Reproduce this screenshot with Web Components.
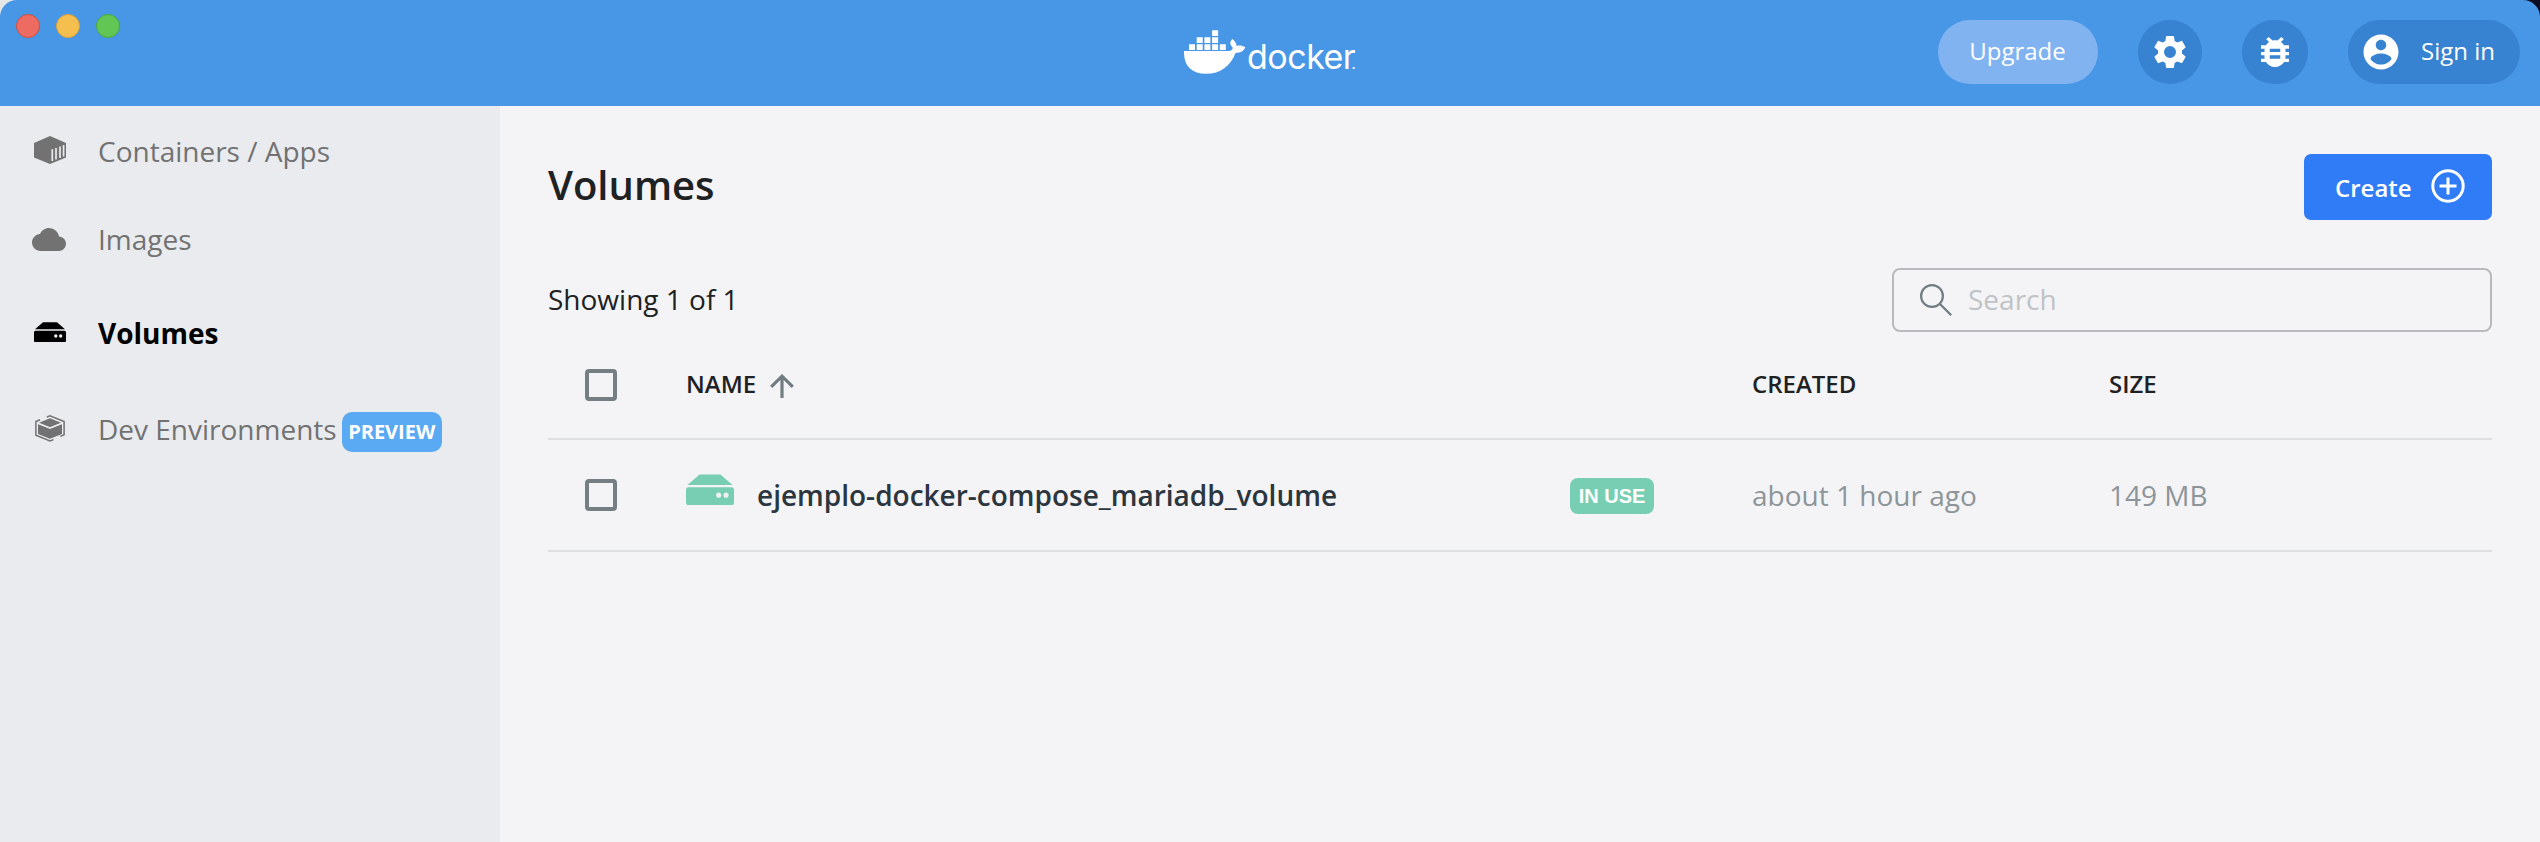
<!DOCTYPE html>
<html lang="en">
<head>
<meta charset="utf-8">
<title>Docker Desktop</title>
<style>
html,body{margin:0;height:100%}
body{font-family:"Open Sans","Noto Sans",sans-serif;background:#f4f4f6;overflow:hidden}
</style>
</head>
<body>
<docker-window></docker-window>
<script>
const ICONS={
container:`<svg width="32" height="28" viewBox="0 0 32 28"><path fill="currentColor" d="M16 0L32 7V21.500L16 28L0 21.500V7Z"/><path stroke="#e9ebee" stroke-width="1.700" fill="none" d="M18.300 25V13.300M22 23.500V11.900M26 22V10.400M29.600 20.600V9"/></svg>`,
cloud:`<svg width="34" height="23" viewBox="0 0 34 23"><path fill="currentColor" d="M8.500 23C3.800 23 0 19.200 0 14.500C0 10 3.500 6.300 8 6C9.600 2.500 13 0 17 0C22 0 26.200 3.600 27 8.500C31 8.800 34 11.900 34 15.800C34 19.800 30.800 23 26.800 23Z"/></svg>`,
drive:`<svg viewBox="0 0 32 20.500" preserveAspectRatio="none"><path fill="currentColor" d="M1 7.200L9 .3H23L31 7.200ZM1.600 8.700H30.400Q32 8.700 32 10.300V18.600Q32 20.500 30.400 20.500H1.600Q0 20.500 0 18.600V10.300Q0 8.700 1.600 8.700Z"/><circle cx="21.800" cy="14" r="1.700" fill="#eef0f2"/><circle cx="26.700" cy="14" r="1.700" fill="#eef0f2"/></svg>`,
env:`<svg width="32" height="27" viewBox="0 0 32 27"><path fill="currentColor" d="M16 3.300L27 7.800L16 12.200L5 7.800ZM4 9L16 13.800L28 9V19L16 23.800L4 19Z"/><path fill="none" stroke="#e9ebee" stroke-width="1.300" d="M4 8.300L16 13L28 8.300"/><path fill="none" stroke="currentColor" stroke-width="1.500" d="M6 4.800L1.900 6.600V20.300L16 26L19.500 24.600M12.800 2L16 .9L30.100 6.600V19.800L26.300 21.400"/></svg>`,
gear:`<svg width="40" height="40" viewBox="0 0 24 24"><path fill="currentColor" d="M19.140 12.940c.04-.3.060-.61.060-.94 0-.32-.02-.64-.07-.94l2.030-1.580c.18-.14.230-.41.120-.61l-1.920-3.320c-.12-.22-.37-.29-.59-.22l-2.390.96c-.5-.38-1.030-.7-1.620-.94l-.36-2.540c-.04-.24-.24-.41-.48-.41h-3.840c-.24 0-.43.170-.47.410l-.36 2.540c-.59.240-1.130.570-1.620.940l-2.390-.96c-.22-.08-.47 0-.59.220L2.740 8.870c-.12.210-.08.470.120.610l2.030 1.580c-.05.300-.09.630-.09.940s.02.640.07.940l-2.030 1.580c-.18.140-.23.410-.12.610l1.920 3.320c.12.220.370.290.590.220l2.390-.96c.5.380 1.030.700 1.620.940l.36 2.540c.05.240.240.410.480.410h3.840c.24 0 .44-.17.470-.41l.36-2.540c.59-.24 1.130-.56 1.620-.94l2.390.96c.22.080.470 0 .590-.22l1.920-3.320c.12-.22.070-.47-.12-.61l-2.010-1.580zM12 15.600A3.600 3.600 0 1 1 12 8.400a3.600 3.600 0 0 1 0 7.200z"/></svg>`,
bug:`<svg width="42" height="40" viewBox="0 0 24 24" preserveAspectRatio="none"><path fill="currentColor" d="M20 8h-2.810c-.45-.78-1.070-1.450-1.820-1.960L17 4.410 15.590 3l-2.170 2.170C12.960 5.060 12.490 5 12 5s-.96.060-1.410.17L8.410 3 7 4.410l1.620 1.630C7.880 6.550 7.260 7.220 6.810 8H4v2h2.090c-.05.330-.09.660-.09 1v1H4v2h2v1c0 .340.040.670.090 1H4v2h2.810c1.040 1.790 2.970 3 5.190 3s4.150-1.210 5.190-3H20v-2h-2.090c.05-.33.090-.66.090-1v-1h2v-2h-2v-1c0-.34-.04-.67-.09-1H20V8zm-5 8h-6v-2h6v2zm0-4h-6v-2h6v2z"/></svg>`,
user:`<svg width="42" height="42" viewBox="0 0 24 24"><path fill="currentColor" d="M12 2C6.480 2 2 6.480 2 12s4.480 10 10 10 10-4.480 10-10S17.520 2 12 2zm0 3c1.660 0 3 1.340 3 3s-1.340 3-3 3-3-1.340-3-3 1.340-3 3-3zm0 14.200c-2.500 0-4.710-1.280-6-3.220.03-1.990 4-3.080 6-3.080 1.990 0 5.970 1.090 6 3.080-1.290 1.940-3.500 3.220-6 3.220z"/></svg>`,
plus:`<svg width="34" height="34" viewBox="0 0 34 34"><g fill="none" stroke="currentColor" stroke-width="3"><circle cx="17" cy="17" r="15.200"/><path d="M17 8.500V25.500M8.500 17H25.500"/></g></svg>`,
search:`<svg width="32" height="32" viewBox="0 0 32 32"><g fill="none" stroke="#6f7c82" stroke-width="2.200"><circle cx="12" cy="12" r="10.900"/><path d="M19.700 19.700L31.200 31.200"/></g></svg>`,
arrow:`<svg width="24" height="24" viewBox="0 0 24 24"><path fill="none" stroke="#727d82" stroke-width="3.200" d="M12 24V2.500M1.200 12.800L12 2.200L22.800 12.800"/></svg>`,
whale:`<svg width="62" height="44" viewBox="0 0 62 44"><g fill="#fff"><path d="M0 21H44.500C47.500 21 49 19.500 48.600 17.500C45.600 14.500 45.600 11.500 48.400 9C51 11 52.300 13.200 52.600 16C55.500 15.200 58.800 15.700 61.300 17.300C59.800 21 56.500 23 51.500 23C46.500 36 36.500 43.800 22 43.800C7.500 43.800-.5 36 0 21Z"/><path d="M5 14.200h6v5.700h-6zM12.700 14.200h6v5.700h-6zM20.400 14.200h6v5.700h-6zM28.100 14.200h6v5.700h-6zM35.800 14.200h6v5.700h-6zM12.700 7.200h6v5.700h-6zM20.400 7.200h6v5.700h-6zM28.100 7.200h6v5.700h-6zM28.100.2h6v5.700h-6z"/></g></svg>`
};
function define(name,html){
  customElements.define(name,class extends HTMLElement{
    connectedCallback(){
      if(this.shadowRoot)return;
      this.attachShadow({mode:"open"}).innerHTML=typeof html==="function"?html(this):html;
    }
  });
}
define("ui-icon",el=>`<style>:host{display:flex;flex:none}svg{display:block}:host([name=drive]) svg{width:var(--w,32px);height:var(--h,20.500px)}</style>${ICONS[el.getAttribute("name")]}`);

define("window-controls",`<style>:host{display:flex;gap:16px;padding:14px 0 0 16px}
i{width:24px;height:24px;border-radius:50%;box-sizing:border-box;border:1px solid #d0503f;background:#ed6b60}
i:nth-of-type(2){background:#f5bf4f;border-color:#d8a03c}i:nth-of-type(3){background:#62c655;border-color:#4ca83e}</style><i></i><i></i><i></i>`);

define("docker-logo",`<style>:host{display:flex;padding:30px 0 0}
span{font:400 34px/40px Inter,sans-serif;color:#fff;margin:6.500px 0 0 1px;letter-spacing:-.5px;white-space:nowrap}
small{font-size:16px;letter-spacing:0;margin-left:-4px}</style>
<ui-icon name="whale"></ui-icon><span>docker<small>.</small></span>`);

define("pill-button",`<style>:host{display:flex;align-items:center;justify-content:center;box-sizing:border-box;height:64px;min-width:64px;border-radius:32px;background:#3782d1;color:#fff;font-size:24px;white-space:nowrap}
:host([kind=upgrade]){background:#80b3f0;width:160px;padding:0 1px 3px 0}
:host([kind=bug]){width:66px}
:host([kind=user]){width:172px;justify-content:flex-start;padding-left:12px;gap:19px}</style><slot></slot>`);

define("title-bar",`<style>:host{display:grid;grid-template-columns:1184px 1fr auto;align-items:start;height:106px;background:#4896e6;flex:none;border-radius:17px 17px 0 0}
.actions{display:flex;gap:40px;padding:20px 20px 0 0}.actions span{padding-bottom:3px}</style>
<window-controls></window-controls><docker-logo></docker-logo>
<div class="actions"><pill-button kind="upgrade">Upgrade</pill-button><pill-button><ui-icon name="gear"></ui-icon></pill-button><pill-button kind="bug"><ui-icon name="bug"></ui-icon></pill-button><pill-button kind="user"><ui-icon name="user"></ui-icon><span>Sign in</span></pill-button></div>`);

define("nav-item",`<style>:host{display:flex;align-items:center;box-sizing:border-box;padding-bottom:2px;height:var(--row,88px);color:#727272;font-size:28px;white-space:nowrap;line-height:38px}
.icon{display:flex;width:98px;box-sizing:border-box;padding:0 0 2px 34px;flex:none}
:host([cloud]) .icon{padding:0 0 0 32px}
:host([active]){color:#000;font-weight:700}</style><div class="icon"><slot name="icon"></slot></div><slot></slot>`);

define("ui-tag",`<style>:host{display:inline-flex;align-items:center;justify-content:center;box-sizing:border-box;color:#fff;font-weight:700;white-space:nowrap;flex:none}
:host([kind=preview]){width:100px;height:40px;border-radius:10px;background:#5aa9f3;font-size:20px;margin:6px 0 0 5px}
:host([kind=use]){width:84px;height:36px;margin-top:2px;border-radius:8px;background:#77ceb2;font:700 20px/24px "Liberation Sans",sans-serif}</style><slot></slot>`);

define("side-nav",`<style>:host{display:flex;flex-direction:column;width:500px;flex:none;background:#e9ebee;box-sizing:border-box}
nav-item:nth-of-type(1){--row:92px}nav-item:nth-of-type(2){--row:84px}nav-item:nth-of-type(3){--row:104px}nav-item:nth-of-type(4){--row:88px}</style>
<nav-item><ui-icon slot="icon" name="container"></ui-icon>Containers / Apps</nav-item>
<nav-item cloud><ui-icon slot="icon" name="cloud"></ui-icon>Images</nav-item>
<nav-item active><ui-icon slot="icon" name="drive"></ui-icon>Volumes</nav-item>
<nav-item><ui-icon slot="icon" name="env"></ui-icon><span>Dev Environments</span><ui-tag kind="preview">PREVIEW</ui-tag></nav-item>`);

define("create-button",`<style>:host{display:flex;align-items:center;box-sizing:border-box;width:188px;height:66px;padding:0 27px 0 31px;justify-content:space-between;border-radius:7px;background:#307bf6;color:#fff;font-size:24px;font-weight:600}ui-icon{margin-top:-2px}</style><slot></slot><ui-icon name="plus"></ui-icon>`);

define("search-field",`<style>:host{display:flex;align-items:center;box-sizing:border-box;width:600px;height:64px;border:2px solid #b9babd;border-radius:8px;padding-left:26px;gap:16px;color:#bfc3c6;font-size:28px}span{padding-bottom:2px}</style><ui-icon name="search"></ui-icon><span><slot></slot></span>`);

define("check-box",`<style>:host{display:block;box-sizing:border-box;width:32px;height:32px;border:4px solid #757e82;border-radius:4px;margin-left:37px}</style>`);

define("table-row",`<style>:host{display:grid;grid-template-columns:138px 884px 182px 357px 1fr;align-items:center;box-sizing:border-box;border-bottom:2px solid #dfe0e2;height:112px;font-size:28px;color:#8d9599}
:host([head]){height:108px;font-size:24px;font-weight:600;color:#202122}</style><slot></slot>`);

define("volumes-page",`<style>:host{display:flex;flex-direction:column;flex:1;min-width:0;padding:48px 48px 0;box-sizing:border-box}
header{display:flex;justify-content:space-between;height:66px;align-items:center}
h1{margin:0 0 5px;font-size:40px;line-height:56px;font-weight:600;color:#202122}
.tools{display:flex;justify-content:space-between;align-items:center;margin-top:48px;font-size:28px;color:#202122}
.tools>span{padding-bottom:2px}
.name{display:flex;align-items:center}
table-row[head]>span{padding-bottom:4px}
.head ui-icon{margin:5px 0 0 14px}
.vol ui-icon{--w:48px;--h:31px;color:#77ceb2;margin:-11px 23px 0 0}
.vol{color:#2b363f;font-weight:600}</style>
<header><h1>Volumes</h1><create-button>Create</create-button></header>
<div class="tools"><span>Showing 1 of 1</span><search-field>Search</search-field></div>
<table-row head><check-box></check-box><span class="name head">NAME<ui-icon name="arrow"></ui-icon></span><span></span><span>CREATED</span><span>SIZE</span></table-row>
<table-row><check-box></check-box><span class="name vol"><ui-icon name="drive"></ui-icon>ejemplo-docker-compose_mariadb_volume</span><ui-tag kind="use">IN USE</ui-tag><span>about 1 hour ago</span><span>149 MB</span></table-row>`);

define("docker-window",`<style>:host{display:flex;flex-direction:column;height:842px;width:2540px;background:linear-gradient(90deg,#e4e6e8 50%,#0d0b20 50%) 0 0/100% 40px no-repeat}
main{display:flex;flex:1;min-height:0;background:#f4f4f6}</style><title-bar></title-bar><main><side-nav></side-nav><volumes-page></volumes-page></main>`);
</script>
</body>
</html>
